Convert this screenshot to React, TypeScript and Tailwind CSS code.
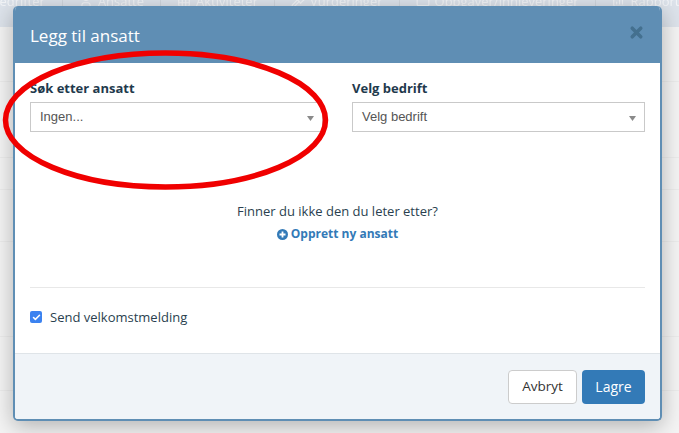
import { BarChart3, Check, Folder, Gavel, Grid3x3, User, X } from "lucide-react"

const navItems = [
  { label: "Ansatte", icon: User },
  { label: "Aktiviteter", icon: Grid3x3 },
  { label: "Vurderinger", icon: Gavel },
  { label: "Oppgaver/innleveringer", icon: Folder },
  { label: "Rapporter", icon: BarChart3 },
]

const rowHeights = [55, 76, 32, 52, 95, 54]

function SelectBox({ label, value }: { label: string; value: string }) {
  return (
    <div>
      <p className="text-[13px] leading-[18px] font-bold text-[#1f3a4d]">{label}</p>
      <div className="mt-[5px] flex h-[30px] items-center justify-between border border-[#c9c9c9] bg-white pr-[8px] pl-[9px]">
        <span className="font-['Liberation_Sans',sans-serif] text-[13px] text-[#555555]">{value}</span>
        <svg width="7" height="5" viewBox="0 0 7 5" className="mt-[2px]">
          <path d="M0 0h7L3.5 5z" fill="#8a8a8a" />
        </svg>
      </div>
    </div>
  )
}

export default function App() {
  return (
    <div className="relative h-[433px] w-[679px] overflow-hidden bg-[#f4f4f4] font-['Open_Sans',sans-serif]">
      <div className="h-[27px] overflow-hidden bg-[#dde3eb]">
        <div className="-mt-[8px] -ml-[22px] flex text-[13px] leading-[18px] whitespace-nowrap text-[#f2f4f7] blur-[0.5px]">
          <span className="border-r border-[#d0d6de] pr-[17px] pl-[13px]">Bedrifter</span>
          {navItems.map(({ label, icon: Icon }) => (
            <span key={label} className="flex items-center gap-[5px] border-r border-[#d0d6de] px-[16px]">
              <Icon size={14} />
              {label}
            </span>
          ))}
        </div>
      </div>

      {rowHeights.map((height) => (
        <div key={height} className="border-b border-[#ececec]" style={{ height }} />
      ))}

      <div className="absolute top-[6px] left-[13px] flex h-[415px] w-[649px] flex-col overflow-hidden rounded-[5px] border-2 border-t-0 border-[#5f8eb4] bg-white shadow-[0_5px_22px_rgba(0,0,0,0.28)]">
        <div className="flex h-[57px] shrink-0 items-center justify-between bg-[#5f8eb4] pr-[15px] pl-[15px]">
          <h1 className="pt-[2px] text-[17px] text-white">Legg til ansatt</h1>
          <X size={17} strokeWidth={5} className="-mt-[5px] text-[#44708f]" />
        </div>

        <div className="flex flex-1 flex-col px-[15px]">
          <div className="grid grid-cols-[293px_293px] gap-[29px] pt-[16px]">
            <SelectBox label="Søk etter ansatt" value="Ingen..." />
            <SelectBox label="Velg bedrift" value="Velg bedrift" />
          </div>

          <div className="mt-[70px] text-center">
            <p className="text-[13px] leading-[18px] text-[#2a3f4f]">Finner du ikke den du leter etter?</p>
            <p className="mt-[5px] flex items-center justify-center gap-[3px] text-[12px] leading-[18px] font-bold text-[#337ab7]">
              <svg width="11" height="11" viewBox="0 0 11 11">
                <circle cx="5.5" cy="5.5" r="5.5" fill="#337ab7" />
                <path d="M5.5 2.5v6M2.5 5.5h6" stroke="#ffffff" strokeWidth="1.8" />
              </svg>
              Opprett ny ansatt
            </p>
          </div>

          <div className="mt-[44px] border-t border-[#e8e8e8] pt-[20px]">
            <div className="flex items-center gap-[8px]">
              <span className="flex size-[12px] items-center justify-center rounded-[2px] bg-[#3b82f0]">
                <Check size={9} strokeWidth={4} className="text-white" />
              </span>
              <span className="text-[13px] leading-[18px] text-[#2a3f4f]">Send velkomstmelding</span>
            </div>
          </div>
        </div>

        <div className="flex h-[66px] shrink-0 items-center justify-end gap-[5px] border-t border-[#dfe4e8] bg-[#f0f4f8] pr-[15px]">
          <button className="h-[34px] w-[69px] rounded-[4px] border border-[#cccccc] bg-white text-[13.5px] text-[#333333]">Avbryt</button>
          <button className="h-[34px] w-[63px] rounded-[4px] bg-[#337ab7] text-[14px] text-white">Lagre</button>
        </div>
      </div>

      <svg width="340" height="200" viewBox="0 0 340 200" fill="none" className="absolute top-0 left-0">
        <ellipse cx="165.5" cy="120" rx="160" ry="67" stroke="#f00000" strokeWidth="5.5" />
      </svg>
    </div>
  )
}
